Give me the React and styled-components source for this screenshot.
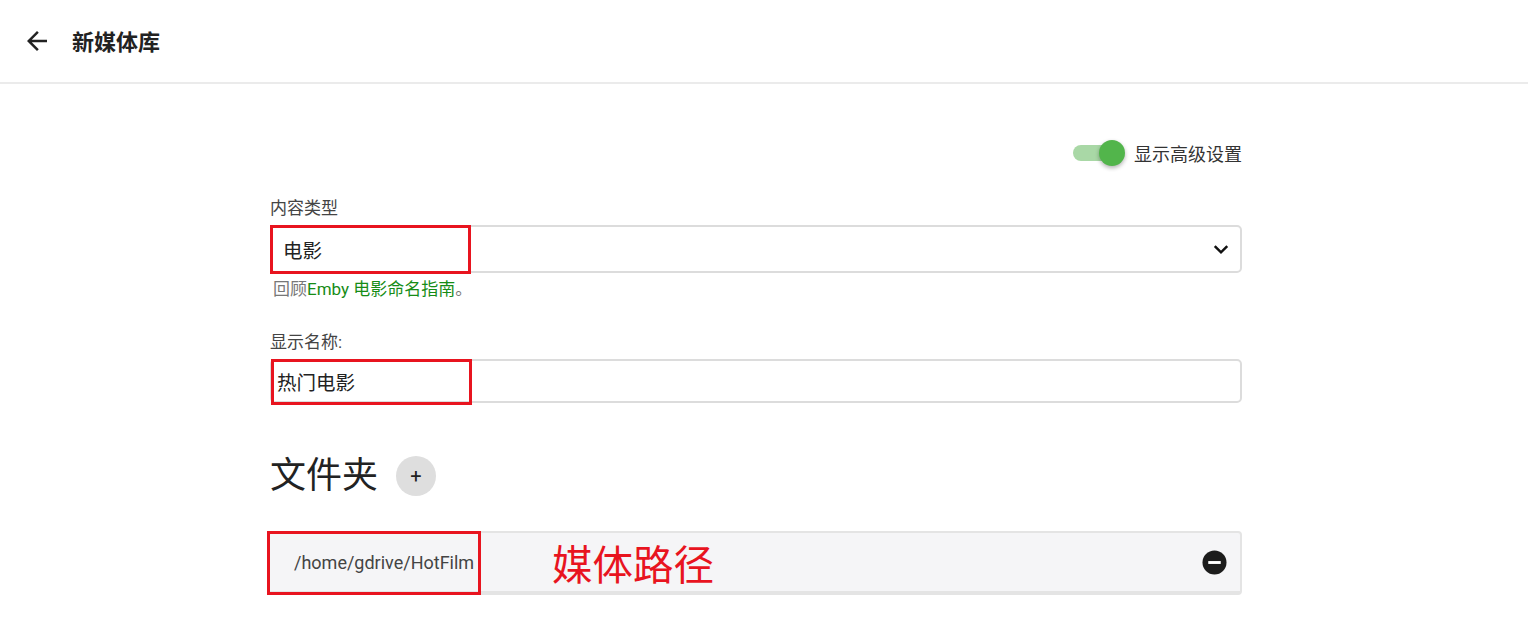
import React from 'react'
import styled, { createGlobalStyle } from 'styled-components'

const GlobalStyle = createGlobalStyle`
  body {
    margin: 0;
    background: #fff;
    font-family: Roboto, "Noto Sans CJK SC", sans-serif;
    color: #222;
  }
`

const Header = styled.div`
  height: 82px;
  display: flex;
  align-items: center;
  gap: 20px;
  padding-left: 22px;
  border-bottom: 2px solid #ebebeb;
`

const BackBtn = styled.div`
  width: 30px;
  height: 30px;
  display: flex;
  cursor: pointer;
`

const Title = styled.div`
  font-size: 22px;
  font-weight: 700;
  color: #222;
  margin-top: -3px;
`

const Main = styled.div`
  width: 972px;
  margin-left: 270px;
  padding-top: 55px;
`

const ToggleRow = styled.div`
  display: flex;
  justify-content: flex-end;
  align-items: center;
  gap: 9px;
  height: 28px;
`

const Track = styled.div`
  position: relative;
  width: 38px;
  height: 16px;
  border-radius: 8px;
  background: #a9d8a6;
  margin-right: 14px;
`

const Thumb = styled.div`
  position: absolute;
  top: -5px;
  right: -14px;
  width: 26px;
  height: 26px;
  border-radius: 50%;
  background: #52b54b;
  box-shadow: 0 2px 4px rgba(0, 0, 0, 0.3);
`

const ToggleLabel = styled.span`
  font-size: 18px;
  color: #333;
`

const Field = styled.div`
  margin-top: ${props => props.top}px;
`

const Label = styled.div`
  font-size: 17px;
  line-height: 22px;
  color: #444;
  margin-bottom: 6px;
`

const Box = styled.div`
  position: relative;
  height: ${props => props.h}px;
  box-sizing: border-box;
  border: 2px solid #dcdcdc;
  border-radius: 5px;
  display: flex;
  align-items: center;
  justify-content: space-between;
  padding: 0 9px 0 ${props => props.pl}px;
  font-size: 19.5px;
  color: #222;
`

const Mark = styled.div`
  position: absolute;
  left: ${props => props.l}px;
  top: ${props => props.t}px;
  width: ${props => props.w}px;
  height: ${props => props.h}px;
  box-sizing: border-box;
  border: 3px solid #e8141f;
  pointer-events: none;
`

const Helper = styled.div`
  font-size: 17px;
  line-height: 20px;
  margin-top: 6px;
  padding-left: 3px;
  color: #777;
  span {
    color: #168c16;
  }
`

const Section = styled.div`
  display: flex;
  align-items: center;
  gap: 18px;
  margin-top: 48px;
`

const Heading = styled.h2`
  margin: 0;
  font-size: 36px;
  font-weight: 400;
  color: #222;
  line-height: 50px;
`

const PlusBtn = styled.div`
  width: 40px;
  height: 40px;
  border-radius: 50%;
  background: #dedede;
  display: flex;
  align-items: center;
  justify-content: center;
  font-size: 20px;
  color: #222;
`

const PathRow = styled.div`
  position: relative;
  margin-top: 30px;
  height: 64px;
  box-sizing: border-box;
  background: #f5f5f7;
  border-top: 2px solid #e4e4e4;
  border-bottom: 4px solid #e4e4e4;
  border-right: 2px solid #e4e4e4;
  border-radius: 4px;
  display: flex;
  align-items: center;
  padding: 0 13px 0 24px;
`

const PathText = styled.div`
  font-size: 18px;
  color: #444;
  width: 258px;
`

const Note = styled.div`
  flex: 1;
  font-size: 40.5px;
  color: #e8141f;
  font-family: "Noto Sans CJK SC", sans-serif;
`

const App = () => {
  return (
    <>
      <GlobalStyle />
      <Header>
        <BackBtn>
          <svg width="30" height="30" viewBox="0 0 24 24">
            <path d="M20 11H7.83l5.59-5.59L12 4l-8 8 8 8 1.41-1.41L7.83 13H20v-2z" fill="#222" />
          </svg>
        </BackBtn>
        <Title>新媒体库</Title>
      </Header>
      <Main>
        <ToggleRow>
          <Track><Thumb /></Track>
          <ToggleLabel>显示高级设置</ToggleLabel>
        </ToggleRow>
        <Field top={30}>
          <Label>内容类型</Label>
          <Box h={48} pl={11}>
            电影
            <svg width="20" height="20" viewBox="0 0 24 24">
              <path d="M4.5 8.5l7.5 7.5 7.5-7.5" fill="none" stroke="#111" strokeWidth="3" />
            </svg>
            <Mark l={-2} t={-2} w={201} h={49} />
          </Box>
          <Helper>回顾<span>Emby 电影命名指南</span>。</Helper>
        </Field>
        <Field top={32}>
          <Label>显示名称:</Label>
          <Box h={44} pl={5}>
            热门电影
            <Mark l={-1} t={-2} w={201} h={46} />
          </Box>
        </Field>
        <Section>
          <Heading>文件夹</Heading>
          <PlusBtn>+</PlusBtn>
        </Section>
        <PathRow>
          <PathText>/home/gdrive/HotFilm</PathText>
          <Note>媒体路径</Note>
          <svg width="25" height="25" viewBox="0 0 26 26">
            <circle cx="13" cy="13" r="12.5" fill="#1c1c1c" />
            <rect x="6.5" y="11.5" width="13" height="3" fill="#fff" />
          </svg>
          <Mark l={-3} t={-2} w={214} h={64} />
        </PathRow>
      </Main>
    </>
  )
}

export default App
